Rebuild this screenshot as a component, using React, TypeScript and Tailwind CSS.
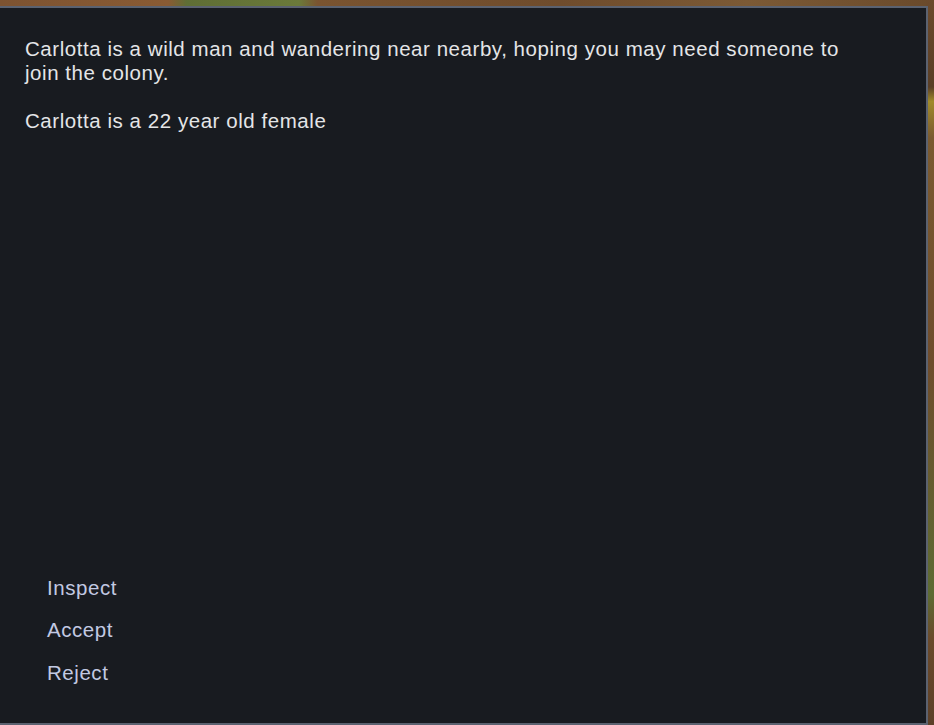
import React from 'react';

const options = ['Inspect', 'Accept', 'Reject'];

export default function App() {
  return (
    <div
      className="relative h-[725px] w-[934px] overflow-hidden bg-[linear-gradient(to_right,#7d5331_0%,#8a5b33_18%,#5f6e35_20%,#6b7a3a_32%,#7a5430_34%,#6f4c2c_60%,#7c5a35_80%,#6a4a2b_100%)]"
      style={{ fontFamily: '"Liberation Sans", Arial, sans-serif' }}
    >
      <div className="absolute right-0 top-0 h-full w-[8px] bg-[linear-gradient(to_bottom,#6b4a2c_0%,#5a3f26_12%,#a08a2a_14%,#7a5a30_19%,#6e4c2c_50%,#5d6b33_82%,#6a4a2b_88%,#5c4028_100%)]" />
      <div className="relative mt-[6px] flex h-[719px] w-[928px] flex-col border-y-2 border-r-2 border-[#5b6270] bg-[#181b20]">
        <div className="px-[25px] pt-[29px] text-[20.5px] leading-[24px] tracking-[0.55px] text-[#e4e5e7]">
          <p className="max-w-[840px]">
            Carlotta is a wild man and wandering near nearby, hoping you may need someone to join the colony.
          </p>
          <p className="mt-[24px]">Carlotta is a 22 year old female</p>
        </div>
        <div className="mt-auto flex flex-col pb-[29px] pl-[47px]">
          {options.map(o => (
            <button
              key={o}
              className="h-[42.5px] cursor-pointer text-left text-[20.5px] leading-[42px] tracking-[0.55px] text-[#c2c9e2]"
            >
              {o}
            </button>
          ))}
        </div>
      </div>
    </div>
  );
}
